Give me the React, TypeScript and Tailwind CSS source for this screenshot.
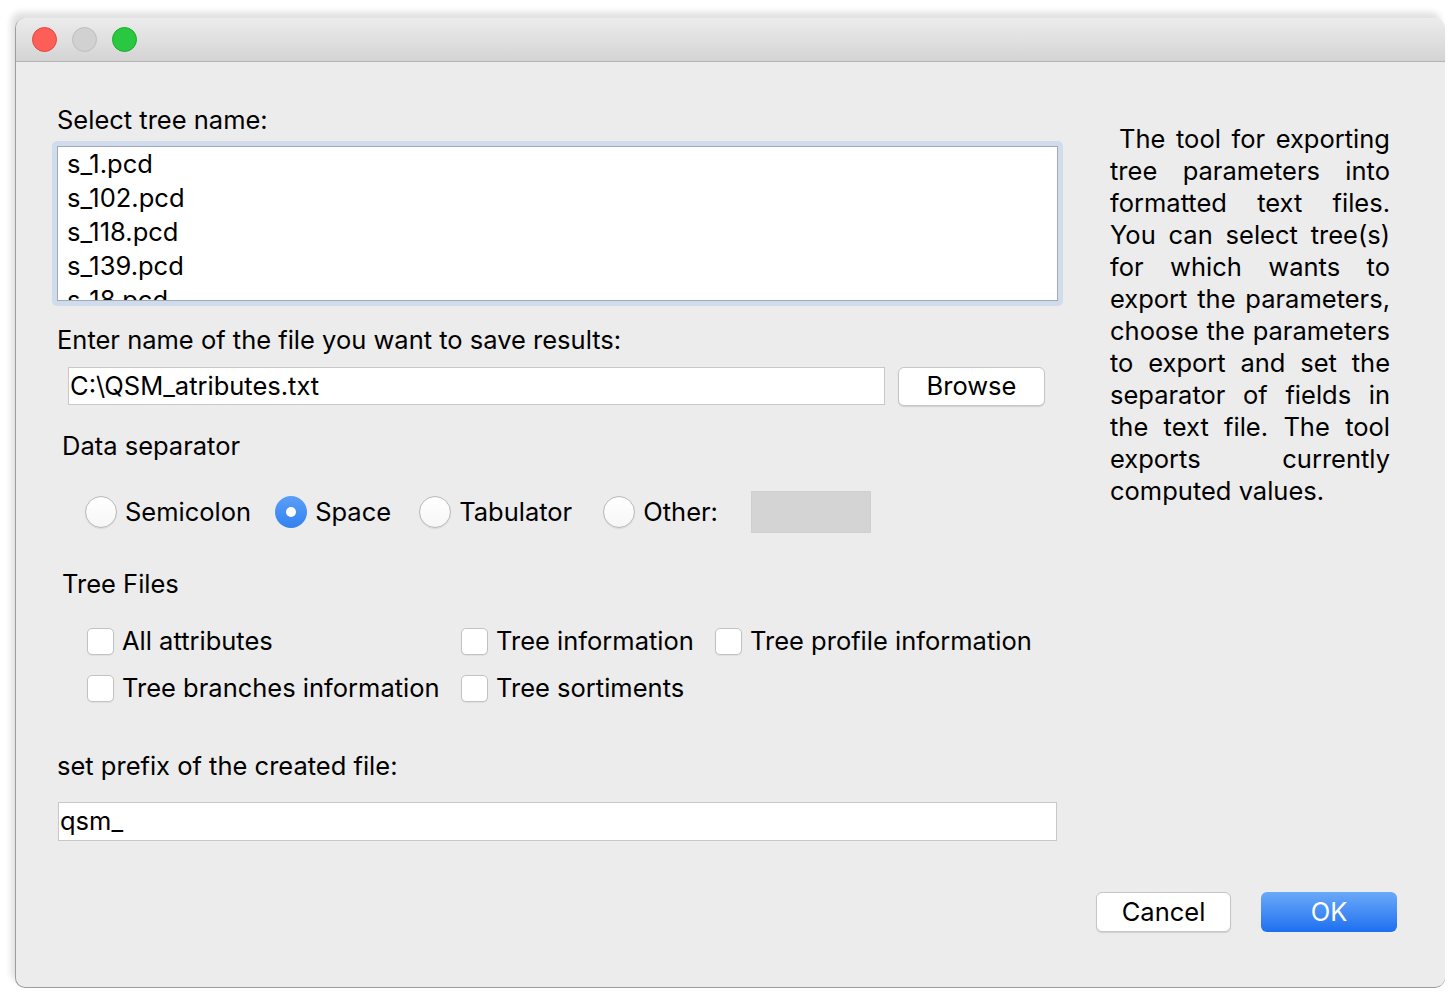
import React from "react";

const font = { fontFamily: "Inter, 'Liberation Sans', Arial, sans-serif" };

function Radio({ label, checked }: { label: string; checked?: boolean }) {
  return (
    <div className="flex items-center">
      {checked ? (
        <span className="flex h-[32px] w-[32px] items-center justify-center rounded-full bg-gradient-to-b from-[#5b9ef7] to-[#3281f0]">
          <span className="h-[10px] w-[10px] rounded-full bg-white" />
        </span>
      ) : (
        <span className="h-[32px] w-[32px] rounded-full border border-[#b9b9b9] bg-gradient-to-b from-white to-[#f6f6f6] shadow-[0_1px_1px_rgba(0,0,0,0.08)]" />
      )}
      <span className="ml-[8px]">{label}</span>
    </div>
  );
}

function Check({ label, w }: { label: string; w?: string }) {
  return (
    <div className={`flex items-center ${w ?? ""}`}>
      <span className="h-[27px] w-[27px] rounded-[5px] border border-[#c2c2c2] bg-white shadow-[0_1px_1px_rgba(0,0,0,0.06)]" />
      <span className="ml-[8px]">{label}</span>
    </div>
  );
}

const lines = [
  "The tool for exporting",
  "tree parameters into",
  "formatted text files.",
  "You can select tree(s)",
  "for which wants to",
  "export the parameters,",
  "choose the parameters",
  "to export and set the",
  "separator of fields in",
  "the text file. The tool",
  "exports currently",
];

export default function App() {
  return (
    <div className="h-[1001px] w-[1452px] overflow-hidden bg-white pl-[15px] pt-[18px] text-[25.5px] text-black" style={font}>
      <div className="flex h-[970px] w-[1430px] flex-col overflow-hidden rounded-[10px] border-l border-b border-[#9d9d9d] bg-[#ececec] shadow-[-4px_-6px_6px_rgba(0,0,0,0.12)]">
        {/* title bar */}
        <div className="flex h-[44px] shrink-0 items-center gap-[15px] border-b border-[#b4b4b4] bg-gradient-to-b from-[#ececec] to-[#d4d4d4] pl-[16px]">
          <span className="h-[25px] w-[25px] rounded-full border border-[#e2463f] bg-[#fd5e57]" />
          <span className="h-[25px] w-[25px] rounded-full border border-[#bdbdbd] bg-[#d1d1d1]" />
          <span className="h-[25px] w-[25px] rounded-full border border-[#1aab2c] bg-[#29c840]" />
        </div>

        <div className="flex">
          {/* left column */}
          <div className="ml-[36px] flex w-[1011px] flex-col pt-[43px]">
            <div className="flex h-[30px] items-center pl-[5px]">Select tree name:</div>
            <div className="mt-[6px] h-[165px] rounded-[5px] bg-[#d0dcec] p-[5px]">
              <div className="h-full overflow-hidden border border-[#9eaabb] bg-white pl-[9px]">
                {["s_1.pcd", "s_102.pcd", "s_118.pcd", "s_139.pcd", "s_18.pcd"].map((n) => (
                  <div key={n} className="flex h-[34px] items-center">{n}</div>
                ))}
              </div>
            </div>

            <div className="mt-[19px] flex h-[30px] items-center pl-[5px]">Enter name of the file you want to save results:</div>
            <div className="mt-[11px] flex h-[40px] items-center">
              <div className="ml-[16px] flex h-[38px] w-[817px] items-center border border-[#c8c8c8] bg-white pl-[1px]">C:\QSM_atributes.txt</div>
              <button className="ml-[13px] flex h-[39px] w-[147px] items-center justify-center rounded-[6px] border border-[#c6c6c6] bg-white shadow-[0_1px_1px_rgba(0,0,0,0.12)]">Browse</button>
            </div>

            <div className="mt-[25px] flex h-[30px] items-center pl-[10px]">Data separator</div>
            <div className="mt-[30px] flex h-[42px] items-center pl-[33px]">
              <Radio label="Semicolon" />
              <div className="ml-[24px]"><Radio label="Space" checked /></div>
              <div className="ml-[28px]"><Radio label="Tabulator" /></div>
              <div className="ml-[31px]"><Radio label="Other:" /></div>
              <div className="ml-[33px] h-[42px] w-[120px] border border-[#cfcfcf] bg-[#d4d4d4]" />
            </div>

            <div className="mt-[36px] flex h-[30px] items-center pl-[10px]">Tree Files</div>
            <div className="mt-[27px] flex h-[30px] items-center pl-[35px]">
              <Check label="All attributes" w="w-[374px]" />
              <Check label="Tree information" w="w-[254px]" />
              <Check label="Tree profile information" />
            </div>
            <div className="mt-[17px] flex h-[30px] items-center pl-[35px]">
              <Check label="Tree branches information" w="w-[374px]" />
              <Check label="Tree sortiments" />
            </div>

            <div className="mt-[48px] flex h-[30px] items-center pl-[5px]">set prefix of the created file:</div>
            <div className="ml-[6px] mt-[21px] flex h-[39px] w-[999px] items-center border border-[#c8c8c8] bg-white pl-[1px]">qsm_</div>
          </div>

          {/* right column */}
          <div className="ml-[47px] w-[280px] pt-[61px] leading-[32px]">
            {lines.map((l, i) => (
              <div key={l} className={`whitespace-nowrap text-justify [text-align-last:justify] ${i === 0 ? "pl-[9px]" : ""}`}>{l}</div>
            ))}
            <div className="whitespace-nowrap">computed values.</div>
          </div>
        </div>

        {/* footer buttons */}
        <div className="mt-[51px] flex justify-end gap-[30px] pr-[48px]">
          <button className="flex h-[40px] w-[135px] items-center justify-center rounded-[6px] border border-[#c6c6c6] bg-white shadow-[0_1px_1px_rgba(0,0,0,0.12)]">Cancel</button>
          <button className="flex h-[40px] w-[136px] items-center justify-center rounded-[6px] bg-gradient-to-b from-[#6aa9f8] to-[#1c6ff0] text-white">OK</button>
        </div>
      </div>
    </div>
  );
}
